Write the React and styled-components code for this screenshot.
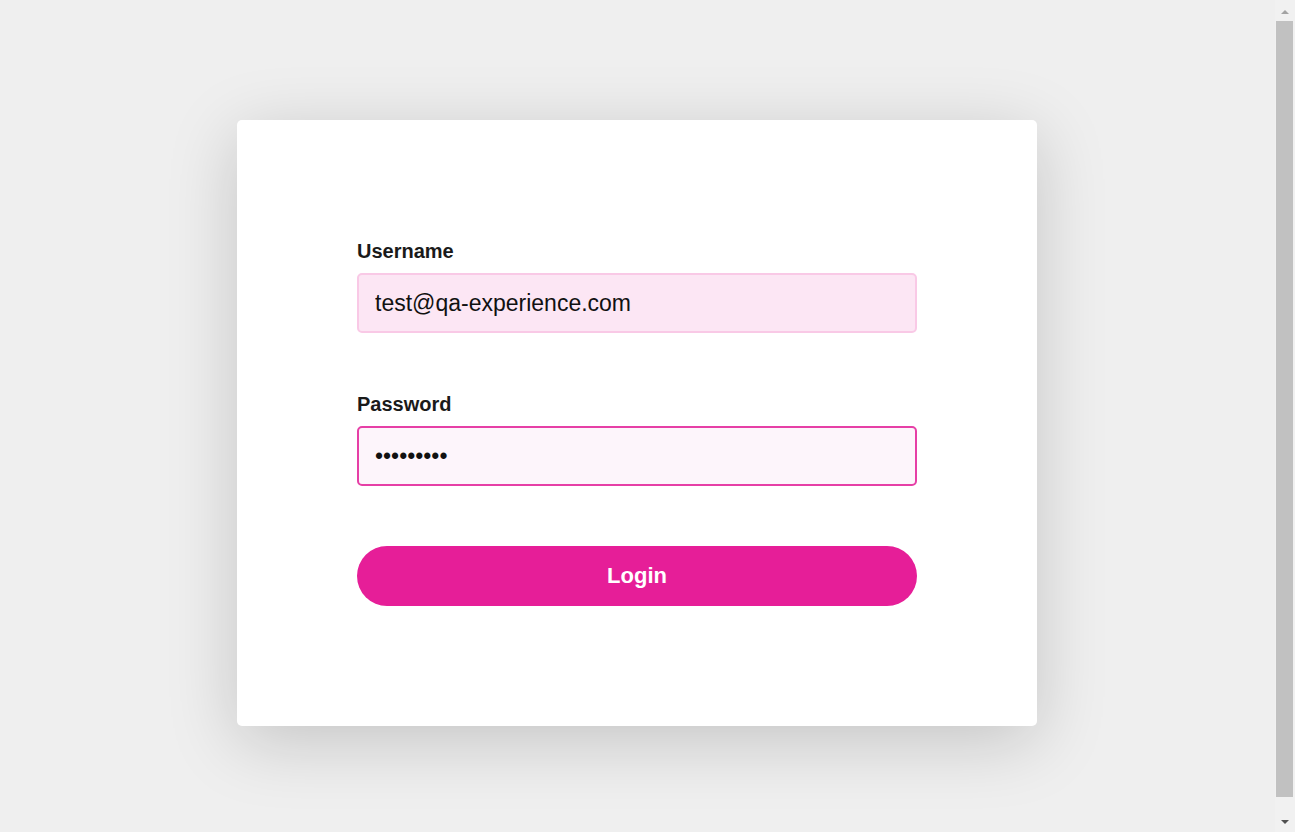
import React from "react";
import styled, { createGlobalStyle } from "styled-components";

const Global = createGlobalStyle`
  html { overflow-y: scroll; }
  body {
    margin: 0;
    background: #efefef;
    font-family: "Liberation Sans", Arial, sans-serif;
  }
`;

const Page = styled.main`
  display: flex;
  justify-content: center;
  padding: 120px 21px 120px 0;
`;

const Card = styled.form`
  width: 800px;
  box-sizing: border-box;
  padding: 120px;
  background: #fff;
  border-radius: 5px;
  box-shadow: 0 15px 70px rgba(0, 0, 0, 0.18);
  display: flex;
  flex-direction: column;
`;

const Field = styled.div`
  display: flex;
  flex-direction: column;
  margin-bottom: 60px;
`;

const Label = styled.label`
  font-size: 20px;
  font-weight: bold;
  color: #1a1a1a;
  margin-bottom: 11px;
  line-height: 22px;
`;

const Input = styled.input`
  height: 60px;
  box-sizing: border-box;
  padding: 0 16px;
  border-radius: 5px;
  border: 2px solid ${(p) => (p.$active ? "#e63fa6" : "#f9c9e6")};
  background: ${(p) => (p.$active ? "#fdf5fb" : "#fce6f4")};
  font-family: "Liberation Sans", Arial, sans-serif;
  font-size: 23px;
  color: #111;
  outline: none;
  caret-color: #000;
`;

const Button = styled.button`
  height: 60px;
  border: none;
  border-radius: 30px;
  background: #e61e98;
  color: #fff;
  font-family: "Liberation Sans", Arial, sans-serif;
  font-size: 22px;
  font-weight: bold;
  cursor: pointer;
`;

/* Window scrollbar drawn over the right edge of the viewport */
const ScrollBar = styled.div`
  position: fixed;
  top: 0;
  right: 0;
  width: 20px;
  height: 100vh;
  background: #f1f1f1;
  display: flex;
  flex-direction: column;
`;

const Arrow = styled.div`
  height: 21px;
  flex: none;
  display: flex;
  align-items: center;
  justify-content: center;
  padding-right: 1px;
  &::before {
    content: "";
    border-left: 4px solid transparent;
    border-right: 4px solid transparent;
    ${(p) =>
      p.$down
        ? "border-top: 4px solid #505050; margin-top: 1px;"
        : "border-bottom: 4px solid #a3a3a3; margin-top: 2px;"}
  }
`;

const Track = styled.div`
  flex: 1;
  display: flex;
  padding: 0 2px 14px 1px;
`;

const Thumb = styled.div`
  flex: 1;
  background: #c1c1c1;
`;

export default function App() {
  return (
    <>
      <Global />
      <Page>
        <Card onSubmit={(e) => e.preventDefault()}>
          <Field>
            <Label htmlFor="username">Username</Label>
            <Input id="username" type="text" defaultValue="test@qa-experience.com" />
          </Field>
          <Field>
            <Label htmlFor="password">Password</Label>
            <Input id="password" type="password" defaultValue="secret123" $active autoFocus />
          </Field>
          <Button type="submit">Login</Button>
        </Card>
      </Page>
      <ScrollBar aria-hidden="true">
        <Arrow />
        <Track>
          <Thumb />
        </Track>
        <Arrow $down />
      </ScrollBar>
    </>
  );
}
